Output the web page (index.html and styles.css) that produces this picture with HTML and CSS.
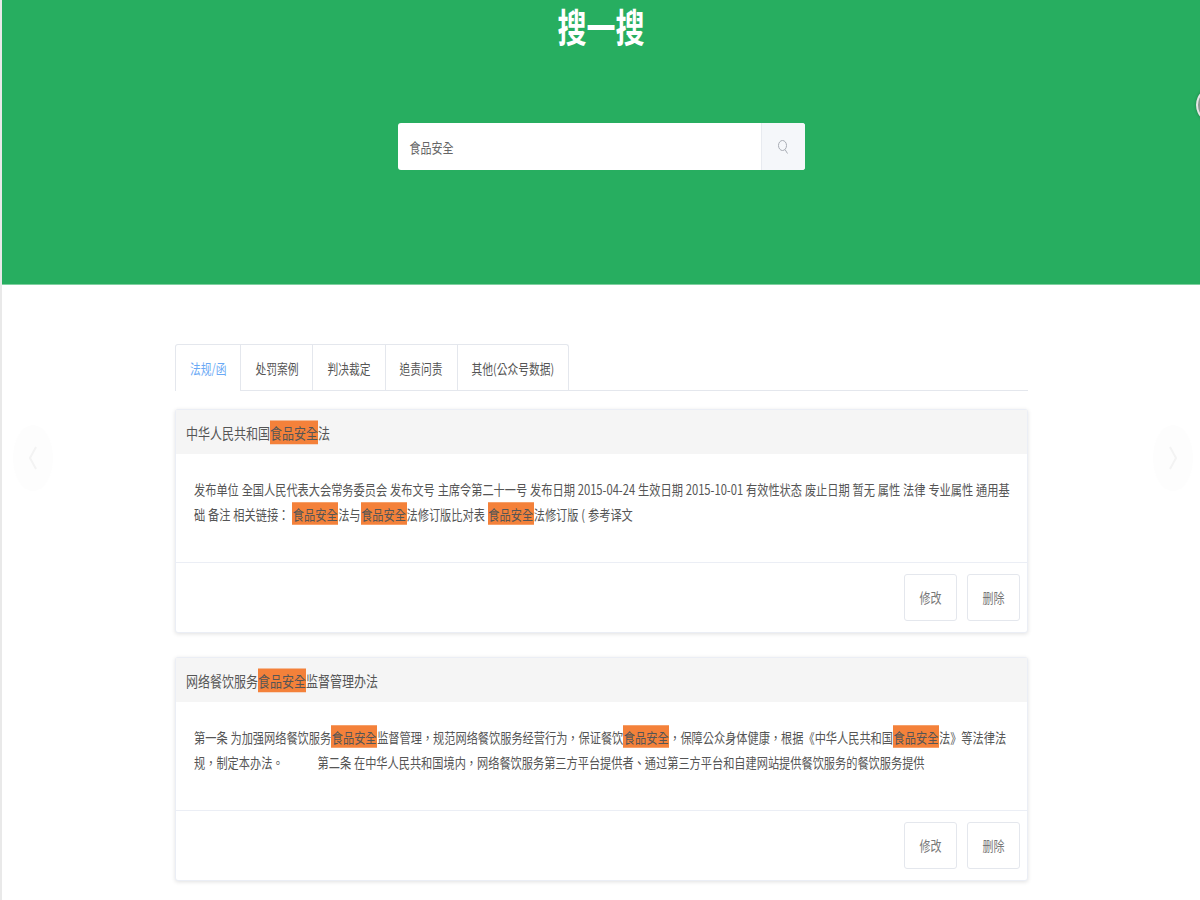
FILE: index.html
```html
<!DOCTYPE html>
<html lang="zh-CN">
<head>
    <meta charset="UTF-8">
    <meta name="viewport" content="width=device-width, initial-scale=1.0">
    <title>搜一搜</title>
    <link rel="stylesheet" href="styles.css">
</head>
<body>
    <div class="page">
        <header class="hero">
            <h1 class="hero-title">搜一搜</h1>
            <div class="search-box">
                <div class="search-input"><span class="tall">食品安全</span></div>
                <div class="search-btn">
                    <svg width="12" height="16" viewBox="0 0 12 16" fill="none" stroke="#a9adb5" stroke-width="1">
                        <ellipse cx="5.5" cy="6.5" rx="4" ry="5"/>
                        <path d="M8 10.5l2.5 4"/>
                    </svg>
                </div>
            </div>
            <div class="edge-circle"></div>
        </header>

        <main class="container">
            <ul class="tabs">
                <li class="tab active"><span class="tall">法规/函</span></li>
                <li class="tab"><span class="tall">处罚案例</span></li>
                <li class="tab"><span class="tall">判决裁定</span></li>
                <li class="tab"><span class="tall">追责问责</span></li>
                <li class="tab"><span class="tall">其他(公众号数据)</span></li>
            </ul>

            <section class="card">
                <div class="card-head"><span class="tall">中华人民共和国<em>食品安全</em>法</span></div>
                <div class="card-body">
                    <div class="card-text">发布单位 全国人民代表大会常务委员会 发布文号 主席令第二十一号 发布日期 2015-04-24 生效日期 2015-10-01 有效性状态 废止日期 暂无 属性 法律 专业属性 通用基础 备注 相关链接： <em>食品安全</em>法与<em>食品安全</em>法修订版比对表 <em>食品安全</em>法修订版 ( 参考译文</div>
                </div>
                <div class="card-foot">
                    <button class="btn"><span class="tall">修改</span></button>
                    <button class="btn"><span class="tall">删除</span></button>
                </div>
            </section>

            <section class="card">
                <div class="card-head"><span class="tall">网络餐饮服务<em>食品安全</em>监督管理办法</span></div>
                <div class="card-body">
                    <div class="card-text">第一条 为加强网络餐饮服务<em>食品安全</em>监督管理，规范网络餐饮服务经营行为，保证餐饮<em>食品安全</em>，保障公众身体健康，根据《中华人民共和国<em>食品安全</em>法》等法律法规，制定本办法。<span class="gap"></span>第二条 在中华人民共和国境内，网络餐饮服务第三方平台提供者、通过第三方平台和自建网站提供餐饮服务的餐饮服务提供</div>
                </div>
                <div class="card-foot">
                    <button class="btn"><span class="tall">修改</span></button>
                    <button class="btn"><span class="tall">删除</span></button>
                </div>
            </section>
        </main>

        <div class="slide-arrow left">
            <svg width="10" height="26" viewBox="0 0 10 26" fill="none" stroke="#f3f3f3" stroke-width="2"><path d="M8 2L2 13l6 11"/></svg>
        </div>
        <div class="slide-arrow right">
            <svg width="10" height="26" viewBox="0 0 10 26" fill="none" stroke="#f3f3f3" stroke-width="2"><path d="M2 2l6 11L2 24"/></svg>
        </div>
    </div>
</body>
</html>
```

FILE: styles.css
```css
html, body {
    margin: 0;
    padding: 0;
    height: 900px;
    overflow: hidden;
    background-color: #e9e9e9;
}
body {
    font-family: "Noto Sans CJK TC", "Liberation Sans", sans-serif;
    font-feature-settings: "locl" 0;
    color: #555;
}
.page {
    position: relative;
    margin-left: 2px;
    height: 900px;
    overflow: hidden;
    background-color: #fff;
}
.tall {
    display: inline-block;
    transform: scaleY(1.25);
}
.hero {
    position: relative;
    height: 285px;
    background-color: #27ae60;
    border-bottom: 1px solid #7fd0a0;
    box-sizing: border-box;
    display: flex;
    flex-direction: column;
    align-items: center;
}
.hero-title {
    margin: 0;
    height: 123px;
    font-family: "Noto Sans CJK SC", sans-serif;
    font-size: 29px;
    line-height: 37px;
    font-weight: 700;
    color: #fff;
    transform: scaleY(1.35);
    transform-origin: top;
}
.search-box {
    display: flex;
    width: 407px;
    height: 47px;
    border-radius: 3px;
    overflow: hidden;
    background-color: #fff;
}
.search-input {
    flex: 1;
    padding-left: 12px;
    font-size: 11px;
    line-height: 49px;
    color: #666;
}
.search-btn {
    width: 43px;
    display: flex;
    align-items: center;
    justify-content: center;
    background-color: #f5f7fa;
    border-left: 1px solid #e8ebf0;
}
.edge-circle {
    position: absolute;
    top: 85px;
    right: -40px;
    width: 40px;
    height: 36px;
    border: 2px solid #e6e6e6;
    border-radius: 50%;
    background-color: #8d9a92;
    box-shadow: 0 0 3px rgba(0, 0, 0, 0.3);
}
.container {
    width: 853px;
    margin: 59px 0 0 173px;
}
.tabs {
    display: flex;
    margin: 0 0 18px;
    padding: 0;
    height: 46px;
    list-style: none;
    border-bottom: 1px solid #e4e7ed;
}
.tab {
    height: 46px;
    padding: 0 14px;
    font-size: 10.75px;
    line-height: 48px;
    color: #555;
    background-color: #fff;
    border: 1px solid #e4e7ed;
    border-left: none;
    border-bottom: none;
    box-sizing: border-box;
}
.tab:first-child {
    border-left: 1px solid #e4e7ed;
    border-top-left-radius: 3px;
}
.tab:last-child {
    border-top-right-radius: 3px;
}
.tab.active {
    height: 47px;
    color: #6aa9f5;
}
.card {
    height: 224px;
    margin-bottom: 24px;
    background-color: #fff;
    border: 1px solid #ebeef5;
    border-radius: 3px;
    box-shadow: 0 1px 4px rgba(0, 0, 0, 0.12);
    box-sizing: border-box;
    display: flex;
    flex-direction: column;
}
.card-head {
    height: 44px;
    padding-left: 10px;
    font-size: 12px;
    line-height: 46px;
    color: #555;
    background-color: #f5f5f5;
}
.card-head em {
    line-height: 19px;
}
.card-body {
    flex: 1;
    padding: 22px 14px 0 18px;
}
.card-text {
    font-size: 11.2px;
    line-height: 20px;
    word-spacing: 0.4px;
    color: #555;
    transform: scaleY(1.25);
    transform-origin: top;
}
.card-foot {
    height: 69px;
    padding-right: 7px;
    display: flex;
    justify-content: flex-end;
    align-items: center;
    gap: 10px;
    border-top: 1px solid #ebeef5;
}
.btn {
    width: 53px;
    height: 47px;
    padding: 0 0 2px;
    font-family: inherit;
    font-size: 11px;
    color: #777;
    background-color: #fff;
    border: 1px solid #e4e7ed;
    border-radius: 3px;
}
em {
    display: inline-block;
    font-style: normal;
    line-height: 18.4px;
    background-color: #f4813a;
    color: #555;
}
.card-text em {
    padding: 0 0.6px;
}
.gap {
    display: inline-block;
    width: 34px;
}
.slide-arrow {
    position: absolute;
    top: 425px;
    width: 40px;
    height: 66px;
    border-radius: 50%;
    background-color: #fdfdfd;
    display: flex;
    align-items: center;
    justify-content: center;
}
.slide-arrow.left {
    left: 11px;
}
.slide-arrow.right {
    right: 7px;
}
```
